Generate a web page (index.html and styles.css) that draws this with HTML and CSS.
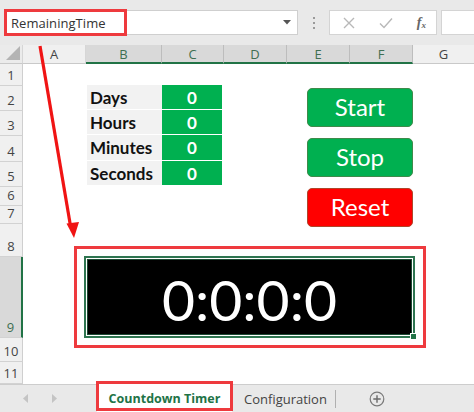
FILE: index.html
```html
<!DOCTYPE html>
<html>
<head>
<meta charset="utf-8">
<link rel="stylesheet" href="styles.css">
</head>
<body>
<div class="app">
  <div class="toolbar">
    <div class="namebox">
      <span class="nb-text">RemainingTime</span>
      <svg class="nb-arrow" width="8" height="5" viewBox="0 0 8 5"><path d="M0 0h8L4 4.5z" fill="#555"/></svg>
    </div>
    <div class="grip"><i></i><i></i><i></i></div>
    <div class="fbtns">
      <svg width="14" height="14" viewBox="0 0 14 14"><path d="M2 2l10 10M12 2L2 12" stroke="#b8b8b8" stroke-width="1.4" fill="none"/></svg>
      <svg width="16" height="14" viewBox="0 0 16 14"><path d="M2 7.5l4 4L14 2.5" stroke="#b8b8b8" stroke-width="1.4" fill="none"/></svg>
      <span class="fx">f<sub>x</sub></span>
    </div>
    <div class="finput"></div>
  </div>

  <div class="sheet">
    <div class="hd corner"><svg width="14" height="14" viewBox="0 0 14 14"><path d="M14 0V14H0z" fill="#b4b4b4"/></svg></div>
    <div class="hd col">A</div>
    <div class="hd col sel">B</div>
    <div class="hd col sel">C</div>
    <div class="hd col sel">D</div>
    <div class="hd col sel">E</div>
    <div class="hd col sel">F</div>
    <div class="hd col last">G</div>

    <div class="rh">1</div>
    <div class="rh">2</div>
    <div class="rh">3</div>
    <div class="rh">4</div>
    <div class="rh">5</div>
    <div class="rh">6</div>
    <div class="rh">7</div>
    <div class="rh">8</div>
    <div class="rh rsel">9</div>
    <div class="rh">10</div>
    <div class="rh">11</div>

    <div class="lbl r2">Days</div><div class="val r2">0</div>
    <div class="lbl r3">Hours</div><div class="val r3">0</div>
    <div class="lbl r4">Minutes</div><div class="val r4">0</div>
    <div class="lbl r5">Seconds</div><div class="val r5">0</div>

    <div class="btns">
      <div class="btn green">Start</div>
      <div class="btn green">Stop</div>
      <div class="btn red">Reset</div>
    </div>

    <div class="timer">
      <div class="timer-inner">0:0:0:0</div>
      <span class="handle"></span>
    </div>
  </div>

  <div class="tabs">
    <div class="nav">
      <svg width="6" height="9" viewBox="0 0 6 9"><path d="M5 0v9L0 4.5z" fill="#c4c4c4"/></svg>
      <svg width="6" height="9" viewBox="0 0 6 9"><path d="M1 0v9L6 4.5z" fill="#c4c4c4"/></svg>
    </div>
    <div class="tab active">Countdown Timer</div>
    <div class="tab conf">Configuration</div>
    <div class="tsep"></div>
    <svg class="plus" width="16" height="16" viewBox="0 0 16 16"><circle cx="8" cy="8" r="6.8" stroke="#7a7a7a" stroke-width="1.2" fill="none"/><path d="M8 4.3v7.4M4.3 8h7.4" stroke="#6a6a6a" stroke-width="1.4"/></svg>
  </div>

  <div class="mark mark-name"></div>
  <div class="mark mark-timer"></div>
  <div class="mark mark-tab"></div>
  <svg class="arrow" width="474" height="412" viewBox="0 0 474 412">
    <path d="M40 46L70.5 226" stroke="#f01414" stroke-width="3.2" fill="none"/>
    <path d="M66.5 223.5L79 222L74 238z" fill="#f01414"/>
  </svg>
</div>
</body>
</html>
```
FILE: styles.css
```css
* { box-sizing: border-box; }
html, body { margin: 0; padding: 0; background: #fff; }
.app {
  position: relative;
  width: 474px;
  height: 412px;
  overflow: hidden;
  display: flex;
  flex-direction: column;
  font-family: "Open Sans", "Noto Sans", sans-serif;
  color: #444;
}

/* ---------- formula bar ---------- */
.toolbar {
  height: 45px;
  flex: none;
  background: #e9e9e9;
  display: flex;
  align-items: flex-start;
  padding: 10px 0 0 5px;
}
.namebox {
  width: 293px;
  height: 25px;
  background: #fff;
  border: 1px solid #cfcfcf;
  display: flex;
  align-items: center;
  justify-content: space-between;
  padding: 0 6px 0 5px;
}
.nb-text { font-size: 13px; color: #333; letter-spacing: 0.05px; }
.grip {
  width: 31px;
  height: 25px;
  display: flex;
  flex-direction: column;
  align-items: center;
  justify-content: center;
  gap: 3px;
}
.grip i { width: 2px; height: 2px; background: #9a9a9a; display: block; }
.fbtns {
  width: 108px;
  height: 25px;
  background: #fff;
  border: 1px solid #d4d4d4;
  display: flex;
  align-items: center;
  justify-content: space-between;
  padding: 0 10px 0 12px;
}
.fx {
  font-family: "Liberation Serif", serif;
  font-style: italic;
  font-weight: bold;
  font-size: 14px;
  color: #666;
}
.fx sub { font-size: 9px; vertical-align: -1px; }
.finput {
  flex: 1;
  height: 25px;
  margin-left: 4px;
  background: #fff;
  border: 1px solid #d4d4d4;
  border-right: none;
}

/* ---------- sheet ---------- */
.sheet {
  flex: none;
  height: 339px;
  display: grid;
  grid-template-columns: 23px 63px 76px 62px 63px 63px 63px 1fr;
  grid-template-rows: 19px 22px 25px 25px 26px 25px 19px 18px 33px 81px 24px 22px;
  background: #fff;
}
.hd {
  grid-row: 1;
  background: #f0f0f0;
  border-right: 1px solid #d6d6d6;
  border-bottom: 1px solid #c9c9c9;
  font-size: 13px;
  color: #444;
  display: flex;
  align-items: center;
  justify-content: center;
}
.corner { justify-content: flex-end; align-items: flex-end; padding: 0 2px 3px 0; background: #ebebeb; }
.col.sel {
  background: #d9d9d9;
  border-right-color: #bdbdbd;
  border-bottom: 2px solid #217346;
  color: #3f6f52;
}
.col.last { border-right: none; }
.rh {
  grid-column: 1;
  background: #f0f0f0;
  border-right: 1px solid #cfcfcf;
  border-bottom: 1px solid #d2d2d2;
  font-size: 13px;
  color: #444;
  display: flex;
  align-items: flex-end;
  justify-content: center;
  padding-bottom: 1px;
  line-height: 18px;
}
.rh.rsel {
  background: #d9d9d9;
  border-right: 2px solid #217346;
  color: #3f6f52;
}

.r2 { grid-row: 3; }
.r3 { grid-row: 4; }
.r4 { grid-row: 5; }
.r5 { grid-row: 6; }
.lbl {
  grid-column: 3;
  margin: -1px 0 2px 1px;
  background: #f2f2f2;
  font-family: Lato, "Open Sans", sans-serif;
  font-weight: bold;
  font-size: 17px;
  color: #111;
  display: flex;
  align-items: center;
  padding-left: 3px;
}
.val {
  grid-column: 4;
  margin: -1px 2px 2px 0;
  background: #00b050;
  font-family: Lato, "Open Sans", sans-serif;
  font-weight: bold;
  font-size: 17px;
  color: #fff;
  display: flex;
  align-items: center;
  justify-content: center;
}

.btns {
  grid-column: 6 / 8;
  grid-row: 3 / 10;
  display: flex;
  flex-direction: column;
  align-items: flex-start;
  gap: 11px;
  padding: 2px 0 0 20px;
}
.btn {
  width: 106px;
  height: 39px;
  border-radius: 5px;
  display: flex;
  align-items: center;
  justify-content: center;
  font-family: Lato, "Open Sans", sans-serif;
  font-size: 24px;
  color: #fff;
  padding-bottom: 2px;
}
.btn.green { background: #00b050; border: 1px solid #3f8a4a; }
.btn.red { background: #ff0000; border: 1px solid #b0452a; }

.timer {
  position: relative;
  grid-column: 3 / 8;
  grid-row: 10;
  margin: -1px -2px 0 -2px;
  border: 2px solid #2e7550;
  padding: 1px;
  background: #fff;
  display: flex;
}
.timer-inner {
  flex: 1;
  background: #000;
  border: 1px solid #1d4a33;
  color: #fff;
  font-family: Lato, "Open Sans", sans-serif;
  font-size: 57px;
  display: flex;
  align-items: center;
  justify-content: center;
  padding-top: 4px;
}
.handle {
  position: absolute;
  right: -4px;
  bottom: -4px;
  width: 7px;
  height: 7px;
  background: #217346;
  border: 1px solid #fff;
}

/* ---------- tabs ---------- */
.tabs {
  flex: 1;
  background: #e9e9e9;
  border-top: 1px solid #cdcdcd;
  display: flex;
  align-items: stretch;
}
.nav {
  flex: none;
  width: 97px;
  display: flex;
  align-items: center;
  gap: 22px;
  padding-left: 23px;
}
.tab {
  flex: none;
  white-space: nowrap;
  display: flex;
  align-items: center;
  font-size: 13px;
  color: #444;
}
.tab.active {
  width: 135px;
  background: #fff;
  color: #217346;
  font-weight: bold;
  font-size: 12.5px;
  justify-content: center;
  margin-top: -2px;
  padding-top: 1px;
}
.tab.conf { padding: 0 0 0 12px; width: 103px; }
.tsep {
  flex: none;
  width: 1px;
  background: #b0b0b0;
  margin: 5px 0 4px 0;
}
.plus { flex: none; align-self: center; margin-left: 33px; }

/* ---------- annotations ---------- */
.mark {
  position: absolute;
  border: 3px solid #ee3a3e;
}
.mark-name { left: 4px; top: 9px; width: 123px; height: 27px; }
.mark-timer { left: 74px; top: 246px; width: 352px; height: 102px; }
.mark-tab { left: 96px; top: 381px; width: 137px; height: 30px; }
.arrow { position: absolute; left: 0; top: 0; pointer-events: none; }
```
